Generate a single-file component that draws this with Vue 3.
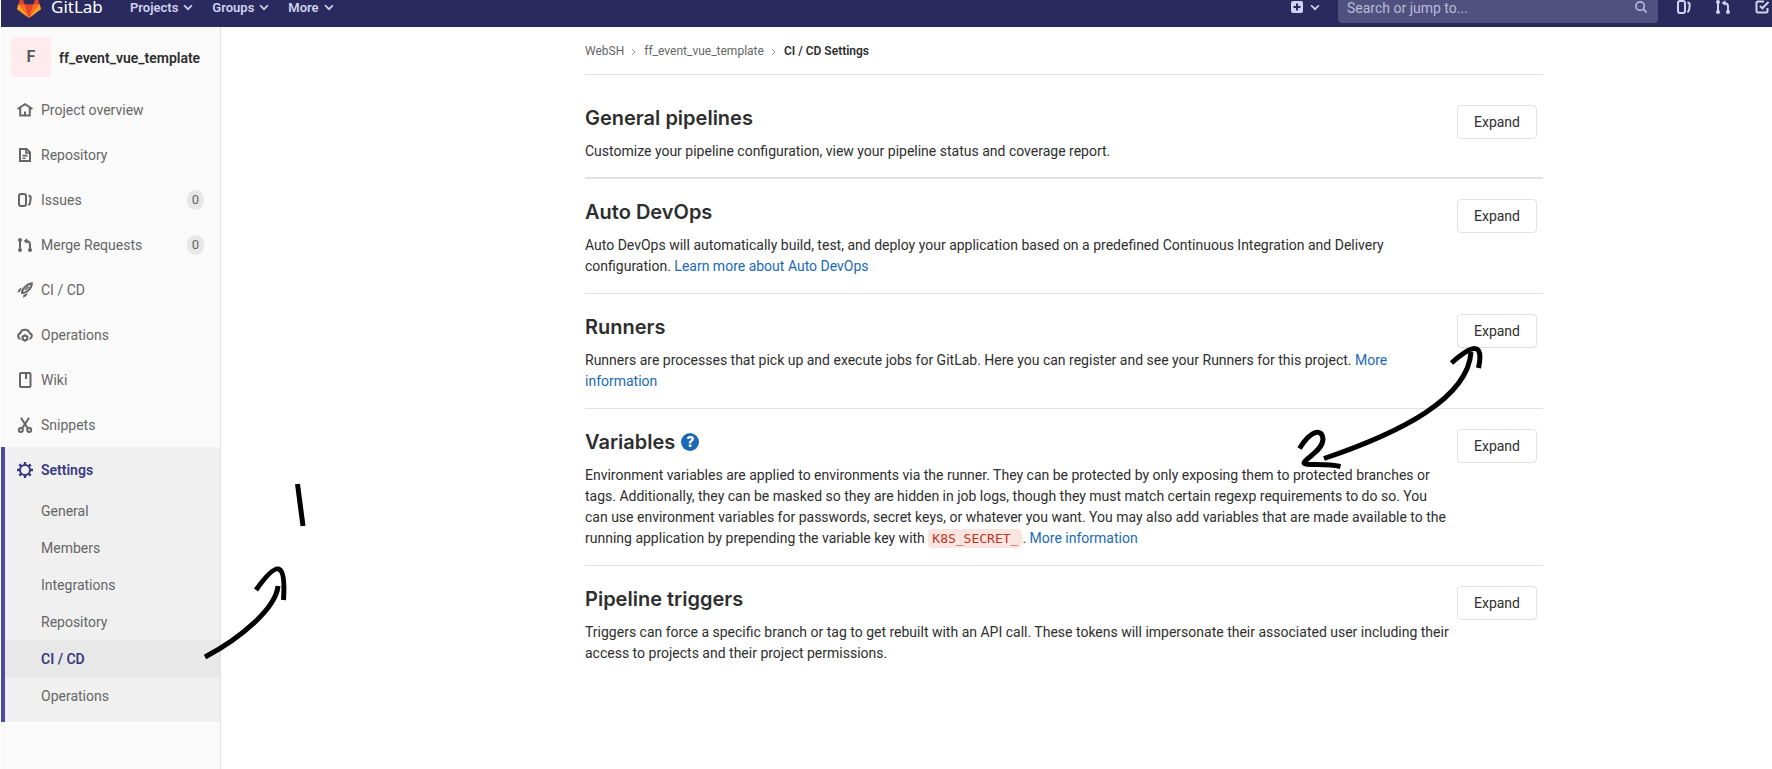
<script setup>
const menus = ['Projects', 'Groups', 'More']
const shortcuts = [
  { label: 'Issues', icon: 'issues' },
  { label: 'Merge requests', icon: 'merge' },
  { label: 'To-Do List', icon: 'todo' }
]

const icons = {
  home: '<path d="M.6 7 8 2.200 15.400 7M3.200 6v7.500h9.600V6" /><path d="M8 9.500v4" stroke-width="2" />',
  doc: '<path d="M3 2h6.5L13 5.5V14H3z" /><path d="M9 2v4h4M5.5 8.6h5M5.5 11.2h3" stroke-width="1.6" />',
  issues: '<rect x="2" y="2" width="7" height="12" rx="2" /><path d="M11.5 3.5c1.5.3 2.4 1.400 2.200 2.900l-.6 4.200c-.2 1.300-.8 2.100-1.800 2.600" />',
  merge: '<path d="M3 3v10M13 13V7.500C13 5 12 4 9 4" /><path d="M10.300 1.200v5.600L6.500 4z" fill="currentColor" stroke="none" /><g fill="currentColor" stroke="none"><circle cx="3" cy="3" r="2" /><circle cx="3" cy="13" r="2" /><circle cx="13" cy="13" r="2" /></g>',
  rocket: '<path d="M5 11c-.5-3.500 4.500-9 9.800-9.800C15 6 9 11.800 5 11z" /><path d="M11.500 4.500 8 8" stroke-width="1.600" /><g fill="currentColor" stroke="none"><path d="M4.800 5.500 2 7 .3 10.600 3 9.800z" /><path d="M10.800 11.200 9.300 14 6 15.800 6.500 12.800z" /></g>',
  cloud: '<path d="M3.500 12C.5 11 .3 7 3.300 6.300 4.200 1.600 11.500 1.500 12.700 6.300 15.700 7 15.500 11 12.500 12" /><circle cx="8" cy="11" r="2.300" /><path d="M8 7.200V8.600M8 13.400v1.400M4.700 9.100l1.300.8M10 12.100l1.300.8M4.700 12.900l1.300-.8M10 9.900l1.300-.8" stroke-width="1.600" />',
  wiki: '<rect x="3" y="1" width="10.500" height="14" rx="1" /><path d="M9 1v6" />',
  snippets: '<path d="M4 .8 10.500 11M12 .8 5.500 11" /><circle cx="3.800" cy="13" r="2" /><circle cx="12.200" cy="13" r="2" />',
  gear: '<circle cx="8" cy="8" r="5" /><path d="M8 0v3M8 13v3M0 8h3M13 8h3M2.300 2.300l2.100 2.100M11.600 11.600l2.100 2.100M2.300 13.700l2.100-2.100M11.600 4.400l2.100-2.100" stroke-width="2.400" />',
  todo: '<path d="M10 2.500H4A1.500 1.500 0 0 0 2.500 4v8A1.500 1.500 0 0 0 4 13.500h8a1.500 1.500 0 0 0 1.500-1.500V9" /><path d="m6 7 2.300 2.300L14.500 3" />',
  chevron: '<path d="m3.500 6 4.500 4.500L12.500 6" />',
  search: '<circle cx="7" cy="7" r="4.800" /><path d="m10.500 10.500 4 4" />'
}

const items = [
  { label: 'Project overview', icon: 'home' },
  { label: 'Repository', icon: 'doc' },
  { label: 'Issues', icon: 'issues', count: 0 },
  { label: 'Merge Requests', icon: 'merge', count: 0 },
  { label: 'CI / CD', icon: 'rocket' },
  { label: 'Operations', icon: 'cloud' },
  { label: 'Wiki', icon: 'wiki' },
  { label: 'Snippets', icon: 'snippets' }
]
const subItems = ['General', 'Members', 'Integrations', 'Repository', 'CI / CD', 'Operations']

const sections = [
  { title: 'General pipelines', text: 'Customize your pipeline configuration, view your pipeline status and coverage report.' },
  {
    title: 'Auto DevOps',
    text: 'Auto DevOps will automatically build, test, and deploy your application based on a predefined Continuous Integration and Delivery configuration.',
    link: 'Learn more about Auto DevOps'
  },
  {
    title: 'Runners',
    text: 'Runners are processes that pick up and execute jobs for GitLab. Here you can register and see your Runners for this project.',
    link: 'More information'
  },
  {
    title: 'Variables',
    help: true,
    text: 'Environment variables are applied to environments via the runner. They can be protected by only exposing them to protected branches or tags. Additionally, they can be masked so they are hidden in job logs, though they must match certain regexp requirements to do so. You can use environment variables for passwords, secret keys, or whatever you want. You may also add variables that are made available to the running application by prepending the variable key with',
    code: 'K8S_SECRET_',
    link: 'More information'
  },
  {
    title: 'Pipeline triggers',
    text: 'Triggers can force a specific branch or tag to get rebuilt with an API call. These tokens will impersonate their associated user including their access to projects and their project permissions.'
  }
]
</script>

<template>
  <div class="page">
    <header class="navbar">
      <a class="brand" href="#">
        <svg width="24" height="24" viewBox="0 0 36 36" aria-hidden="true">
          <path fill="#e24329" d="M2 14l9.380 9v-9l-4-12.280c-.205-.632-1.176-.632-1.380 0z" />
          <path fill="#e24329" d="M34 14l-9.380 9v-9l4-12.280c.205-.632 1.176-.632 1.380 0z" />
          <path fill="#e24329" d="M18 34.380 3 14h30z" />
          <path fill="#fc6d26" d="M18 34.380 11.380 14H2l4 11z" />
          <path fill="#fc6d26" d="M18 34.380 24.620 14H34l-4 11z" />
          <path fill="#fca326" d="M2 14 .1 20.160c-.18.565 0 1.200.5 1.560l17.420 12.660z" />
          <path fill="#fca326" d="m34 14 1.900 6.160c.18.565 0 1.200-.5 1.560L18 34.380z" />
        </svg>
        <span>GitLab</span>
      </a>
      <nav class="menus">
        <button v-for="m in menus" :key="m" type="button">
          {{ m }}
          <svg class="icon small" viewBox="0 0 16 16" aria-hidden="true" v-html="icons.chevron" />
        </button>
      </nav>
      <button class="create" type="button" aria-label="New">
        <svg width="16" height="16" viewBox="0 0 16 16" aria-hidden="true">
          <rect x="2" y="2" width="12" height="12" rx="2" fill="currentColor" />
          <path d="M8 4.500v7M4.500 8h7" stroke="#2a2a5f" stroke-width="2" />
        </svg>
        <svg class="icon small" viewBox="0 0 16 16" aria-hidden="true" v-html="icons.chevron" />
      </button>
      <form class="search" @submit.prevent>
        <input type="search" placeholder="Search or jump to..." aria-label="Search or jump to" />
        <svg class="icon small" viewBox="0 0 16 16" aria-hidden="true" v-html="icons.search" />
      </form>
      <a v-for="s in shortcuts" :key="s.label" class="shortcut" href="#" :aria-label="s.label">
        <svg class="icon" viewBox="0 0 16 16" aria-hidden="true" v-html="icons[s.icon]" />
      </a>
    </header>

    <div class="body">
      <aside class="sidebar">
        <a class="project" href="#">
          <span class="avatar">F</span>
          <span class="label">ff_event_vue_template</span>
        </a>
        <nav>
          <a v-for="i in items" :key="i.label" class="item" href="#">
            <svg class="icon" viewBox="0 0 16 16" aria-hidden="true" v-html="icons[i.icon]" />
            <span class="label">{{ i.label }}</span>
            <span v-if="i.count !== undefined" class="count">{{ i.count }}</span>
          </a>
          <div class="settings">
            <a class="item current" href="#">
              <svg class="icon" viewBox="0 0 16 16" aria-hidden="true" v-html="icons.gear" />
              <span class="label">Settings</span>
            </a>
            <a v-for="s in subItems" :key="s" class="sub" :class="{ current: s === 'CI / CD' }" href="#">{{ s }}</a>
          </div>
        </nav>
      </aside>

      <main class="content">
        <div class="inner">
          <nav class="crumbs" aria-label="Breadcrumb">
            <a href="#">WebSH</a>
            <svg width="6" height="8" viewBox="0 0 6 8" aria-hidden="true"><path d="m1 1 3 3-3 3" /></svg>
            <a href="#">ff_event_vue_template</a>
            <svg width="6" height="8" viewBox="0 0 6 8" aria-hidden="true"><path d="m1 1 3 3-3 3" /></svg>
            <strong>CI / CD Settings</strong>
          </nav>
          <section v-for="s in sections" :key="s.title">
            <div class="info">
              <h4>
                {{ s.title }}
                <a v-if="s.help" class="help" href="#" aria-label="Help">?</a>
              </h4>
              <p>
                {{ s.text }}
                <template v-if="s.code"><code>{{ s.code }}</code>. </template>
                <a v-if="s.link" href="#">{{ s.link }}</a>
              </p>
            </div>
            <button class="expand" type="button">Expand</button>
          </section>
        </div>
      </main>
    </div>

    <svg class="marks" width="1772" height="769" viewBox="0 0 1772 769" aria-hidden="true">
      <path d="M297.500 484 303 526" />
      <path d="M205 657C241 638 276 608 278 586M256 590C278 559 286 562 283.500 600" />
      <path d="M1299.500 448.500C1311 430 1322 428 1323 439 1323 451 1304 459 1304 463 1305 466 1325 463 1340.500 466.500" />
      <path d="M1324 458.500C1402 432 1468 398 1471 352M1451.500 363C1473 344 1484 342 1478.500 368" />
    </svg>
  </div>
</template>

<style>
body {
  margin: 0;
  background: #fff;
}
</style>

<style scoped>
.page {
  position: relative;
  min-height: 100vh;
  padding-left: 1px;
  box-sizing: border-box;
  overflow: hidden;
  display: flex;
  flex-direction: column;
  font: 14px/21px Roboto, "Liberation Sans", sans-serif;
  color: #2e2e2e;
}
a {
  color: #1b69b6;
  text-decoration: none;
}
button {
  font: inherit;
  color: inherit;
  border: 0;
  background: none;
  padding: 0;
}
.icon {
  width: 16px;
  height: 16px;
  flex: none;
  fill: none;
  stroke: currentColor;
  stroke-width: 2;
}
.icon.small {
  width: 14px;
  height: 14px;
}
.navbar {
  height: 40px;
  margin-top: -13px;
  padding-left: 16px;
  display: flex;
  align-items: center;
  background: #2a2a5f;
  color: #d1d1f0;
}
.brand {
  display: flex;
  align-items: center;
  gap: 10px;
  width: 113px;
  color: #fff;
  font: 17px/24px "Noto Sans", sans-serif;
}
.menus {
  flex: 1;
  display: flex;
  gap: 17px;
  font-size: 13px;
  font-weight: 600;
}
.menus button,
.create {
  display: flex;
  align-items: center;
  gap: 3px;
}
.create {
  margin-right: 16px;
}
.search {
  display: flex;
  align-items: center;
  width: 320px;
  height: 32px;
  box-sizing: border-box;
  padding: 0 10px 0 9px;
  border-radius: 4px;
  background: #51517f;
  color: #b3b3d6;
}
.search input {
  flex: 1;
  min-width: 0;
  padding: 2px 0 0;
  border: 0;
  outline: 0;
  background: none;
  color: inherit;
  font: inherit;
}
.search input::placeholder {
  color: #b9b9da;
}
.shortcut {
  display: flex;
  margin-left: 23px;
  color: #d1d1f0;
}
.search + .shortcut {
  margin-left: 18px;
}
.shortcut:last-child {
  margin-right: 2px;
}
.body {
  flex: 1;
  display: flex;
}
.sidebar {
  width: 219px;
  flex: none;
  border-right: 1px solid #e1e1e1;
  background: #fafafa;
}
.project {
  display: flex;
  align-items: center;
  gap: 8px;
  padding: 10px;
  font-weight: 600;
  color: #2e2e2e;
}
.avatar {
  width: 40px;
  height: 40px;
  border-radius: 4px;
  background: #ffebee;
  color: #555;
  font-size: 16px;
  line-height: 40px;
  text-align: center;
  flex: none;
}
.label {
  padding-top: 2px;
}
.item {
  display: flex;
  align-items: center;
  gap: 8px;
  height: 45px;
  padding: 0 16px;
  color: #666;
}
.count {
  margin-left: auto;
  width: 17px;
  line-height: 20px;
  border-radius: 9px;
  background: #e7e7e7;
  font-size: 13px;
  text-align: center;
}
.settings {
  box-shadow: inset 4px 0 #4b4ba3;
  background: #f0f0f0;
  padding-bottom: 8px;
}
.sub {
  display: block;
  margin-left: 4px;
  padding: 2px 0 0 36px;
  line-height: 35px;
  color: #666;
}
.sub.current {
  background: #e8e8e8;
}
.item.current,
.sub.current {
  color: #393982;
  font-weight: 600;
}
.content {
  flex: 1;
  display: grid;
  grid-template-columns: minmax(16px, 364fr) minmax(0, 958px) minmax(16px, 229fr);
}
.inner {
  grid-column: 2;
}
.crumbs {
  display: flex;
  align-items: center;
  gap: 7px;
  height: 45px;
  padding-top: 2px;
  border-bottom: 1px solid #e1e1e1;
  font-size: 12px;
}
.crumbs a {
  color: #666;
}
.crumbs svg {
  fill: none;
  stroke: #999;
}
.crumbs strong {
  font-weight: 600;
}
section {
  display: flex;
  justify-content: space-between;
  align-items: flex-start;
  padding: 20px 6px 16px 0;
  border-top: 1px solid #e1e1e1;
}
section:first-of-type {
  padding-top: 30px;
  padding-bottom: 15px;
  border-top: 0;
}
section:nth-of-type(2) {
  border-top-width: 2px;
}
.info {
  flex: 0 1 866px;
}
h4 {
  display: flex;
  align-items: center;
  gap: 6px;
  margin: 0 0 10px;
  font-family: Inter, sans-serif;
  font-size: 20px;
  line-height: 26px;
  font-weight: 600;
}
p {
  margin: 0;
}
.help {
  width: 18px;
  border-radius: 50%;
  background: #1b69b6;
  color: #fff;
  font-size: 14px;
  line-height: 18px;
  font-weight: 800;
  text-align: center;
}
code {
  padding: 2px 4px;
  border-radius: 4px;
  background: #fbe5e1;
  color: #c0341d;
  font: 13px/16px "DejaVu Sans Mono", monospace;
}
.expand {
  width: 80px;
  height: 34px;
  flex: none;
  border: 1px solid #e1e1e1;
  border-radius: 4px;
  background: #fff;
}
.marks {
  position: absolute;
  top: 0;
  left: 0;
  fill: none;
  stroke: #000;
  stroke-width: 5;
  stroke-linejoin: round;
  pointer-events: none;
}
</style>
